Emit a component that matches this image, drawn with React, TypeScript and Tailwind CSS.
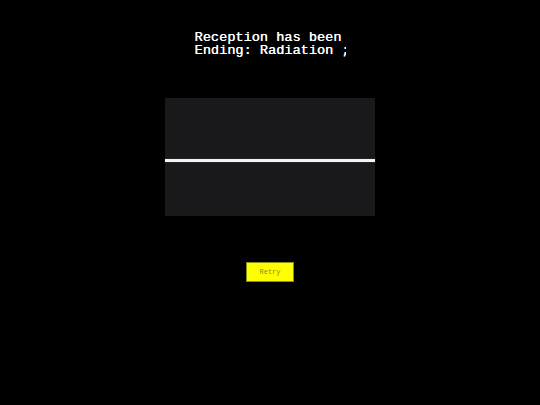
export default function App() {
  return (
    <div className="flex h-[405px] w-full flex-col items-center bg-black">
      <div className="mt-[31px] w-[151px] overflow-hidden whitespace-nowrap font-['Liberation_Mono',monospace] text-[13.6px] leading-[13px] text-white [text-shadow:0.3px_0_0_#fff]">
        <div>Reception has been</div>
        <div>Ending: Radiation ;</div>
      </div>

      <div className="mt-[41px] flex h-[118px] w-[210px] flex-col bg-[#19181a]">
        <div className="h-[61px]" />
        <div className="h-[3px] w-full bg-[#f4f4f4] shadow-[0_0_1px_#888]" />
      </div>

      <button
        type="button"
        className="mt-[46px] flex h-[20px] w-[48px] items-center justify-center border border-[#8c8c1e] bg-[#ffff00] font-['Liberation_Mono',monospace] text-[7px] text-[#8a8a30]"
      >
        Retry
      </button>
    </div>
  );
}
